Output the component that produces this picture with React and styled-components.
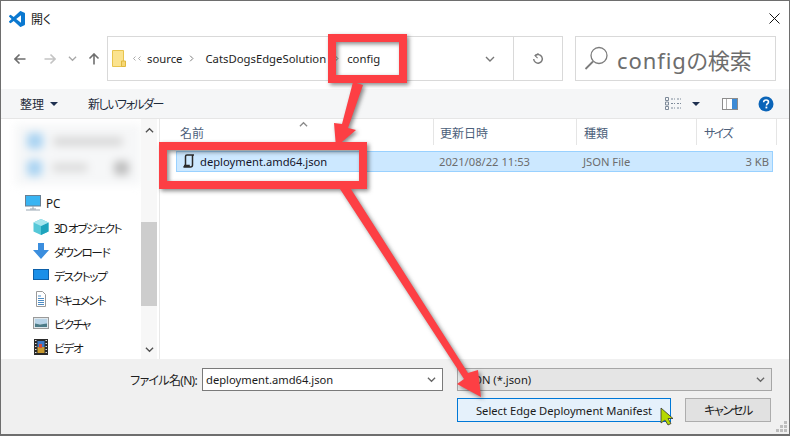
import React from "react";
import styled, { createGlobalStyle } from "styled-components";

const Global = createGlobalStyle`
  html, body { margin: 0; padding: 0; background: #fff; }
  * { box-sizing: border-box; }
  body {
    font-family: "Noto Sans", "Noto Sans CJK JP", sans-serif; font-size: 11.2px; color: #1a1a1a;
    font-feature-settings: "palt" 1;
  }
`;

const Page = styled.div`position: relative; width: 790px; height: 436px; overflow: hidden;`;
const Window = styled.div`
  width: 790px; height: 436px; display: flex; flex-direction: column;
  border: 1px solid #6e6e6e; border-bottom-width: 2px; background: #fff;
`;
const TitleBar = styled.div`height: 35px; display: flex; align-items: center; padding: 0 9px 0 8px;`;
const TitleText = styled.span`margin-left: 6px; font-size: 12px; font-family: "Noto Sans CJK JP", sans-serif; line-height: 1;`;
const CloseBtn = styled.span`margin-left: auto; display: flex;`;

const AddressRow = styled.div`height: 53px; display: flex; align-items: flex-start;`;
const NavGroup = styled.div`width: 106px; height: 45px; display: flex; align-items: center; padding-left: 13px;`;
const NavBtn = styled.span`display: flex; margin-left: ${p => p.$gap || 0}px;`;
const AddressBox = styled.div`
  width: 456px; height: 45px; border: 1px solid #d9d9d9; display: flex; align-items: center; padding-left: 4px;
`;
const Crumb = styled.span`margin-left: ${p => p.$gap || 0}px; font-size: 11.3px; color: #1e1e1e; white-space: nowrap; display: inline-flex; align-items: center;`;
const AddressEnd = styled.div`margin-left: auto; display: flex; align-items: center; height: 100%;`;
const RefreshBox = styled.div`
  width: 49px; height: 100%; margin-left: 18px; border-left: 1px solid #d9d9d9;
  display: flex; align-items: center; justify-content: center;
`;
const SearchBox = styled.div`
  width: 201px; height: 45px; margin-left: 12px; border: 1px solid #d9d9d9;
  display: flex; align-items: center; padding-left: 8px;
  font-size: 22px; color: #6d6d6d; gap: 8px; white-space: nowrap;
`;
const SearchLatin = styled.span`letter-spacing: 0.9px;`;

const Toolbar = styled.div`
  height: 30px; background: #f5f6f7; border-bottom: 1px solid #e6e6e6;
  display: flex; align-items: center; padding: 0 15px 0 19px; font-size: 12px; color: #1e2a3a;
  font-family: "Noto Sans CJK JP", sans-serif;
`;
const ToolLabel = styled.span`white-space: nowrap; margin-left: ${p => p.$gap || 0}px; letter-spacing: ${p => p.$ls || 0}px;`;
const Caret = styled.span`
  display: inline-block; width: 0; height: 0; margin-left: ${p => p.$gap || 0}px;
  border-left: 4px solid transparent; border-right: 4px solid transparent; border-top: 4px solid #1e3050;
`;
const ToolRight = styled.div`margin-left: auto; display: flex; align-items: center;`;
const ToolSpace = styled.span`width: ${p => p.$w}px;`;

const Body = styled.div`height: 240px; display: flex;`;
const Sidebar = styled.div`width: 140px; padding-top: 5px; overflow: hidden;`;
const BlurBlock = styled.div`
  height: 61px; margin-left: 14px; background: #f6f7f8; display: flex; flex-direction: column; justify-content: space-around;
  padding: 4px 12px; filter: blur(4px);
`;
const BlurRow = styled.div`display: flex; align-items: center; gap: 10px;`;
const BlurSpot = styled.span`
  width: ${p => p.$w}px; height: ${p => p.$h}px; background: ${p => p.$c}; border-radius: 4px; margin-left: ${p => p.$gap || 0}px;
`;
const NavTree = styled.div`margin-top: 6px;`;
const TreeRow = styled.div`
  height: 24px; display: flex; align-items: center; gap: 5px;
  padding-left: ${p => (p.$root ? 24 : 32)}px; font-size: 11.7px; letter-spacing: ${p => (p.$root ? 0 : -1.4)}px; color: #1a1a1a; white-space: nowrap;
`;
const IconSlot = styled.span`width: 16px; height: 16px; display: flex; flex: none;`;

const ScrollTrack = styled.div`
  width: 16px; background: #f7f7f7; display: flex; flex-direction: column; align-items: center;
  padding: 7px 0 5px; justify-content: space-between; position: relative;
`;
const ScrollThumb = styled.div`position: absolute; left: 0; right: 0; top: 103px; height: 84px; background: #cdcdcd;`;
const ListPane = styled.div`flex: 1; margin-left: 2px; border-left: 1px solid #e8e8e8; position: relative;`;
const ColGrid = styled.div`display: grid; grid-template-columns: ${p => p.$cols};`;
const HeadCell = styled.div`
  height: 26px; padding-left: ${p => p.$pad}px; display: flex; align-items: center; padding-top: 1px;
  font-size: 12px; letter-spacing: ${p => p.$ls || 0}px; color: #4c607a; border-right: 1px solid #e5e5e5;
  font-family: "Noto Sans CJK JP", sans-serif;
`;
const SortArrow = styled.span`position: absolute; left: 139px; top: 1px; display: flex;`;
const FileRow = styled.div`
  margin: 6px 0 0 16px; width: 597px; height: 21px; background: #cce8ff; border: 1px solid #99d1ff;
  display: grid; grid-template-columns: 257px 143px 120px 1fr; align-items: center; font-size: 11.2px;
`;
const FileName = styled.div`display: flex; align-items: center; gap: 5px; padding-left: 5px; color: #14142a; font-size: 11.2px;`;
const Meta = styled.div`color: #6d6d6d; padding-left: ${p => p.$pad || 0}px; text-align: ${p => p.$right ? "right" : "left"}; padding-right: ${p => p.$right ? 3 : 0}px;`;

const Footer = styled.div`flex: 1; background: #f0f0f0; padding-top: 9px; position: relative;`;
const FieldRow = styled.div`display: flex; height: 23px; align-items: center;`;
const FieldLabel = styled.label`width: 196px; text-align: right; font-size: 12px; letter-spacing: -0.7px; color: #1e1e1e; white-space: nowrap;`;
const Combo = styled.div`
  width: ${p => p.$w}px; height: 23px; margin-left: ${p => p.$gap}px; display: flex; align-items: center; justify-content: space-between;
  padding: 0 6px 0 ${p => p.$pad}px; font-size: 11.2px;
  background: ${p => (p.$filled ? "#e5e5e5" : "#fff")}; border: 1px solid ${p => (p.$filled ? "#a6a6a6" : "#7a7a7a")};
`;
const ButtonRow = styled.div`display: flex; justify-content: flex-end; gap: 14px; margin-top: 7px; padding-right: 18px;`;
const Button = styled.button`
  height: 24px; width: ${p => p.$w}px; padding: 0; font-size: ${p => (p.$primary ? 11.2 : 12)}px; letter-spacing: ${p => (p.$primary ? 0 : -1.3)}px; color: #1a1a1a;
  font-family: "Noto Sans", "Noto Sans CJK JP", sans-serif; font-feature-settings: "palt" 1;
  background: ${p => (p.$primary ? "#e5f1fb" : "#e1e1e1")};
  border: 1px solid ${p => (p.$primary ? "#0078d7" : "#adadad")};
`;
const Grip = styled.svg`position: absolute; right: 2px; bottom: 2px;`;
const Overlay = styled.svg`position: absolute; left: 0; top: 0; pointer-events: none;`;
const AnnotationGroup = styled.g`filter: drop-shadow(2px 2px 2px rgba(40, 40, 40, 0.55));`;

const chevronPaths = { down: "M1 3l4 4 4-4", up: "M1 7l4-4 4 4", right: "M3 1l4 4-4 4", left: "M7 1L3 5l4 4" };
const Chevron = ({ c = "#7a7a7a", s = 10, d = "down" }) => (
  <svg width={s} height={s} viewBox="0 0 10 10" fill="none" stroke={c} strokeWidth="1.4">
    <path d={chevronPaths[d]} />
  </svg>
);
const ArrowIcon = ({ c, d }) => (
  <svg width="12" height="12" viewBox="0 0 12 12" fill="none" stroke={c} strokeWidth="1.6"><path d={d} /></svg>
);

const Help = () => (
  <svg width="16" height="16" viewBox="0 0 16 16">
    <circle cx="8" cy="8" r="7.5" fill="#0a64b8" />
    <path d="M5.6 6.2C5.7 4.7 6.7 4 8.1 4c1.5 0 2.4.9 2.4 2 0 1.7-2 1.7-2 3.4" fill="none" stroke="#fff" strokeWidth="1.6" />
    <rect x="7.5" y="10.6" width="1.8" height="1.8" fill="#fff" />
  </svg>
);

export default function App() {
  return (
    <Page>
      <Global />
      <Window>
        <TitleBar>
          <svg width="16" height="16" viewBox="0 0 24 24"><path fill="#0a78d0" d="M23.15 2.587L18.21.21a1.494 1.494 0 0 0-1.705.29l-9.46 8.63-4.12-3.128a.999.999 0 0 0-1.276.057L.327 7.261A1 1 0 0 0 .326 8.74L3.899 12 .326 15.26a1 1 0 0 0 .001 1.479L1.65 17.94a.999.999 0 0 0 1.276.057l4.12-3.128 9.46 8.63a1.492 1.492 0 0 0 1.704.29l4.942-2.377A1.5 1.5 0 0 0 24 20.06V3.939a1.5 1.5 0 0 0-.85-1.352zm-5.146 14.861L10.826 12l7.178-5.448v10.896z" /></svg>
          <TitleText>開く</TitleText>
          <CloseBtn>
            <svg width="11" height="11" viewBox="0 0 11 11" stroke="#111" strokeWidth="1"><path d="M.5.5l10 10M10.5.5l-10 10" /></svg>
          </CloseBtn>
        </TitleBar>
        <AddressRow>
          <NavGroup>
            <NavBtn><ArrowIcon c="#6e6e6e" d="M11.5 6H1M5.5 1.5L1 6l4.5 4.5" /></NavBtn>
            <NavBtn $gap={18}><ArrowIcon c="#c4c4c4" d="M.5 6H11M6.5 1.5L11 6l-4.5 4.5" /></NavBtn>
            <NavBtn $gap={12}><Chevron c="#a8a8a8" s={9} /></NavBtn>
            <NavBtn $gap={11}><ArrowIcon c="#6e6e6e" d="M6 11.5V1M1.5 5.5L6 1l4.5 4.5" /></NavBtn>
          </NavGroup>
          <AddressBox>
            <svg width="14" height="17" viewBox="0 0 14 17">
              <path d="M.5.5h11v16H.5z" fill="#fbe38f" stroke="#e8c44e" />
              <path d="M9.5 11h4v5.5h-4z" fill="#f7d774" stroke="#e0b93e" />
            </svg>
            <Crumb $gap={6}><Chevron c="#8a8a8a" s={5} d="left" /><Chevron c="#8a8a8a" s={5} d="left" /></Crumb>
            <Crumb $gap={5}>source</Crumb>
            <Crumb $gap={6}><Chevron c="#7a7a7a" s={7} d="right" /></Crumb>
            <Crumb $gap={10}>CatsDogsEdgeSolution</Crumb>
            <Crumb $gap={7}><Chevron c="#7a7a7a" s={7} d="right" /></Crumb>
            <Crumb $gap={7}>config</Crumb>
            <AddressEnd>
              <Chevron c="#777" s={10} />
              <RefreshBox>
                <svg width="12" height="12" viewBox="0 0 12 12" fill="none" stroke="#7a7a7a" strokeWidth="1.4">
                  <path d="M3.2 2.6A4.3 4.3 0 1 1 1.7 6" />
                  <path d="M6.5.6L3 2.6l2.6 2.6" strokeWidth="1.1" />
                </svg>
              </RefreshBox>
            </AddressEnd>
          </AddressBox>
          <SearchBox>
            <svg width="25" height="25" viewBox="0 0 25 25" fill="none" stroke="#7c7c7c" strokeWidth="1.3">
              <circle cx="15" cy="9.5" r="8" />
              <path d="M9 15.5L1.5 23" strokeWidth="1.8" />
            </svg>
            <span><SearchLatin>config</SearchLatin>の検索</span>
          </SearchBox>
        </AddressRow>
        <Toolbar>
          <ToolLabel>整理</ToolLabel>
          <Caret $gap={6} />
          <ToolLabel $gap={30} $ls={-1.5}>新しいフォルダー</ToolLabel>
          <ToolRight>
            <svg width="17" height="13" viewBox="0 0 17 13" fill="none" stroke="#7d8a99">
              <path d="M.5.5h3v3h-3zM.5 5h3v3h-3zM.5 9.5h3v3h-3z" />
              <path d="M6 2h4M6 6.5h4M6 11h4M12 2h4M12 6.5h4M12 11h4" strokeDasharray="2 1" />
            </svg>
            <Caret $gap={10} />
            <ToolSpace $w={22} />
            <svg width="16" height="12" viewBox="0 0 16 12">
              <rect x=".5" y=".5" width="15" height="11" fill="#fff" stroke="#8c8c8c" />
              <rect x="10" y="1" width="5" height="10" fill="#3d8bd6" />
              <rect x="4" y="1" width="1" height="10" fill="#b0b0b0" />
            </svg>
            <ToolSpace $w={20} />
            <Help />
          </ToolRight>
        </Toolbar>
        <Body>
          <Sidebar>
            <BlurBlock>
              <BlurRow><BlurSpot $w={16} $h={16} $c="#a9d3f2" /><BlurSpot $w={70} $h={9} $c="#d8d8d8" /></BlurRow>
              <BlurRow><BlurSpot $w={16} $h={16} $c="#a9d3f2" /><BlurSpot $w={40} $h={9} $c="#dcdcdc" /><BlurSpot $w={16} $h={14} $c="#bdbdbd" $gap={16} /></BlurRow>
            </BlurBlock>
            <NavTree>
              <TreeRow $root>
                <IconSlot>
                  <svg width="16" height="16" viewBox="0 0 16 16">
                    <rect x=".5" y=".5" width="15" height="10.5" fill="#39b4f2" stroke="#6a7f92" />
                    <path d="M5 14h6M8 11v3M1 15h14" stroke="#9aa7b3" />
                  </svg>
                </IconSlot>
                PC
              </TreeRow>
              <TreeRow>
                <IconSlot>
                  <svg width="16" height="16" viewBox="0 0 16 16">
                    <path d="M8 0l7.5 3.5v9L8 16 .5 12.500v-9z" fill="#55c8d8" />
                    <path d="M8 7l7.500-3.500v9L8 16z" fill="#1fa4bd" />
                    <path d="M8 7L.5 3.500 8 0l7.500 3.500z" fill="#a6e6ee" />
                  </svg>
                </IconSlot>
                3D オブジェクト
              </TreeRow>
              <TreeRow>
                <IconSlot>
                  <svg width="16" height="16" viewBox="0 0 16 16"><path d="M5 0h6v7h5l-8 9-8-9h5z" fill="#3b8ede" /></svg>
                </IconSlot>
                ダウンロード
              </TreeRow>
              <TreeRow>
                <IconSlot>
                  <svg width="16" height="16" viewBox="0 0 16 16">
                    <rect x=".5" y="2.500" width="15" height="10" fill="#1a8fe8" stroke="#0c5fa8" />
                  </svg>
                </IconSlot>
                デスクトップ
              </TreeRow>
              <TreeRow>
                <IconSlot>
                  <svg width="16" height="16" viewBox="0 0 16 16" fill="none">
                    <path d="M3.500.5h6l3 3v12h-9z" fill="#fff" stroke="#9a9a9a" />
                    <path d="M5 5h3M5 7.500h6M5 9.500h6M5 11.500h6M5 13.500h6" stroke="#4e8cc4" />
                  </svg>
                </IconSlot>
                ドキュメント
              </TreeRow>
              <TreeRow>
                <IconSlot>
                  <svg width="16" height="16" viewBox="0 0 16 16">
                    <rect x=".5" y="2.500" width="15" height="11" fill="#dfe7ec" stroke="#9a9a9a" />
                    <path d="M2 4h12v5H2z" fill="#b8d4e8" />
                    <path d="M2 12V8.500l5 1 7-1V12z" fill="#4d7c88" />
                  </svg>
                </IconSlot>
                ピクチャ
              </TreeRow>
              <TreeRow>
                <IconSlot>
                  <svg width="16" height="16" viewBox="0 0 16 16">
                    <rect x="1" y="0" width="14" height="16" fill="#2b2b2b" />
                    <path d="M2 1.500h1.500M2 4.500h1.500M2 7.500h1.500M2 10.500h1.500M2 13.500h1.500M12.500 1.500H14M12.500 4.500H14M12.500 7.500H14M12.500 10.500H14M12.500 13.500H14" stroke="#ddd" />
                    <rect x="4.500" y="2" width="7" height="6" fill="#3a78c8" />
                    <rect x="4.500" y="8" width="7" height="6" fill="#c99a2e" />
                    <path d="M6 5h3v4H6z" fill="#d84a3a" />
                  </svg>
                </IconSlot>
                ビデオ
              </TreeRow>
            </NavTree>
          </Sidebar>
          <ScrollTrack>
            <ScrollThumb />
            <Chevron c="#505050" s={9} d="up" />
            <Chevron c="#505050" s={9} d="down" />
          </ScrollTrack>
          <ListPane>
            <ColGrid $cols="274px 143px 120px 80px">
              <HeadCell $pad={20}>名前</HeadCell>
              <HeadCell $pad={6}>更新日時</HeadCell>
              <HeadCell $pad={7}>種類</HeadCell>
              <HeadCell $pad={7} $ls={-1.6}>サイズ</HeadCell>
            </ColGrid>
            <SortArrow><Chevron c="#8a8a8a" s={9} d="up" /></SortArrow>
            <FileRow>
              <FileName>
                <svg width="13" height="15" viewBox="0 0 13 15" fill="none" stroke="#2a2a2a" strokeWidth="1.5">
                  <path d="M3.500 12V2.500a1.500 1.500 0 0 1 1.500-1.500h7" />
                  <path d="M10.500 1v10a2 2 0 0 1-2 2H1.500c1-.3 1.300-1 1.300-1.500h5" />
                </svg>
                deployment.amd64.json
              </FileName>
              <Meta $pad={5}>2021/08/22 11:53</Meta>
              <Meta $pad={6}>JSON File</Meta>
              <Meta $right>3 KB</Meta>
            </FileRow>
          </ListPane>
        </Body>
        <Footer>
          <FieldRow>
            <FieldLabel>ファイル名(N):</FieldLabel>
            <Combo $w={241} $gap={5} $pad={3}>
              deployment.amd64.json
              <Chevron c="#666" s={9} />
            </Combo>
            <Combo $w={315} $gap={14} $pad={6} $filled>
              JSON (*.json)
              <Chevron c="#666" s={9} />
            </Combo>
          </FieldRow>
          <ButtonRow>
            <Button $primary $w={214}>Select Edge Deployment Manifest</Button>
            <Button $w={86}>キャンセル</Button>
          </ButtonRow>
          <Grip width="11" height="11" viewBox="0 0 11 11" fill="#bdbdbd">
            <path d="M8 0h3v3H8zM4 4h3v3H4zM8 4h3v3H8zM0 8h3v3H0zM4 8h3v3H4zM8 8h3v3H8z" />
          </Grip>
        </Footer>
      </Window>
      <Overlay width="790" height="436" viewBox="0 0 790 436">
        <AnnotationGroup fill="#fd3f44">
          <path d="M353 82l10 3-15 43 8 2-20 17-2-24 8 1z" />
          <path d="M340 189l9-3 119 187 10-3 3 27-24-13 7-5z" />
          <path fillRule="evenodd" d="M328 34h79v49h-79zM336 42v33h63V42z" />
          <path fillRule="evenodd" d="M159 142h208v47H159zM167 150v31h192v-31z" />
        </AnnotationGroup>
        <path d="M661 408v15l4-3 3 5 3-1.500-3-5h5z" fill="#b5d800" stroke="#333" strokeWidth=".8" />
      </Overlay>
    </Page>
  );
}
